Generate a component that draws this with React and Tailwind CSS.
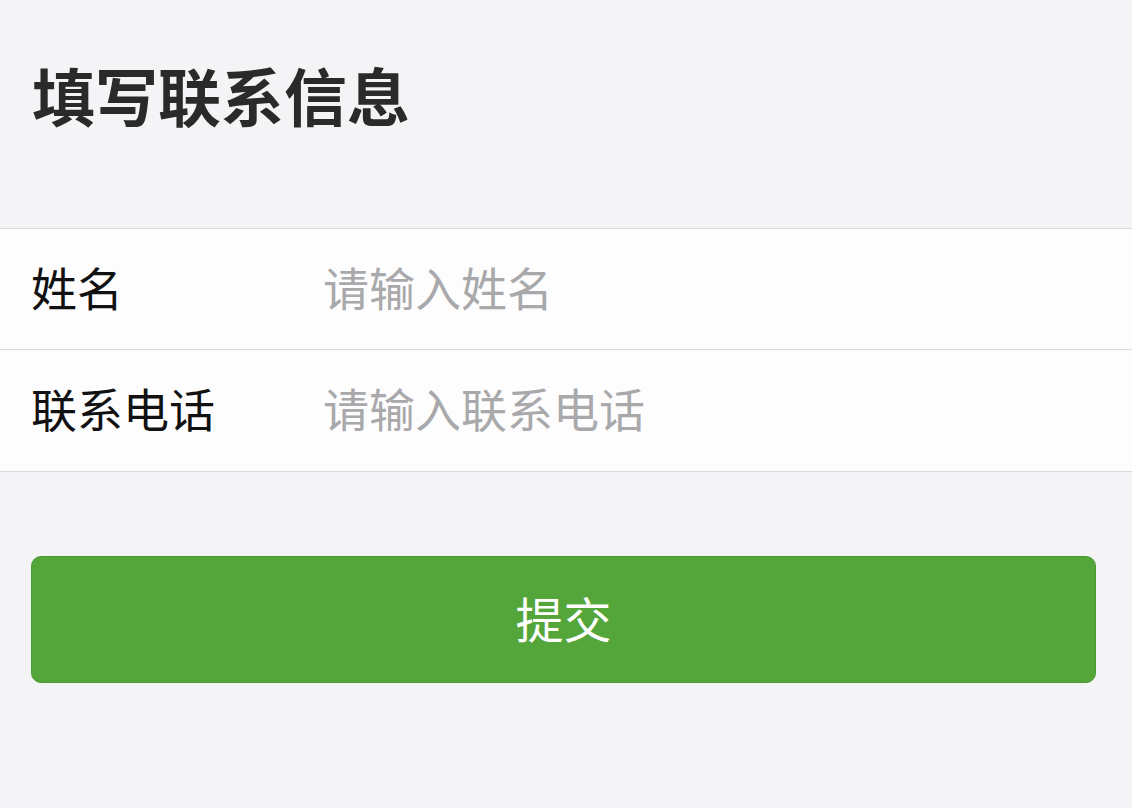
export default function App() {
  return (
    <div
      className="min-h-[808px] w-full bg-[#f4f4f6]"
      style={{ fontFamily: '"Noto Sans CJK SC", "Noto Sans", sans-serif' }}
    >
      <div className="px-[32px] pt-[54px] h-[228px]">
        <h1 className="text-[63px] leading-[80px] font-bold text-[#2a2a2a]">填写联系信息</h1>
      </div>

      <div className="bg-[#fdfdfe] border-t border-b border-[#dadadc]">
        <div className="flex items-center h-[121px] pb-[6px] border-b border-[#dadadc]">
          <div className="w-[323px] pl-[31px] text-[46px] text-[#111]">姓名</div>
          <input
            className="flex-1 bg-transparent text-[46px] outline-none placeholder:text-[#a9a9ab]"
            placeholder="请输入姓名"
          />
        </div>
        <div className="flex items-center h-[121px] pb-[6px]">
          <div className="w-[323px] pl-[31px] text-[46px] text-[#111]">联系电话</div>
          <input
            className="flex-1 bg-transparent text-[46px] outline-none placeholder:text-[#a9a9ab]"
            placeholder="请输入联系电话"
          />
        </div>
      </div>

      <div className="px-[31px] pt-[84px]">
        <button className="w-[1065px] h-[127px] pb-[6px] rounded-[10px] bg-[#54a63a] border border-[#4a9a33] text-white text-[48px]">
          提交
        </button>
      </div>
    </div>
  );
}
